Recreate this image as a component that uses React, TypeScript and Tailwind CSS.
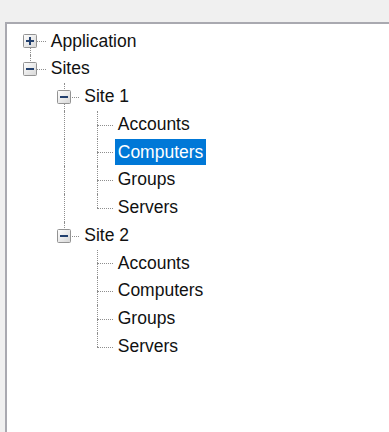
import { useId } from "react";

type TreeNode = {
  label: string;
  children?: TreeNode[];
  expanded?: boolean;
  selected?: boolean;
};

type FlatRow = {
  node: TreeNode;
  guides: boolean[];
  hasNext: boolean;
  isFirstRoot: boolean;
};

const siteItems = (selected?: string): TreeNode[] =>
  ["Accounts", "Computers", "Groups", "Servers"].map((label) => ({
    label,
    selected: label === selected,
  }));

const TREE: TreeNode[] = [
  { label: "Application", children: [{ label: "Settings" }], expanded: false },
  {
    label: "Sites",
    expanded: true,
    children: [
      { label: "Site 1", expanded: true, children: siteItems("Computers") },
      { label: "Site 2", expanded: true, children: siteItems() },
    ],
  },
];

function flatten(nodes: TreeNode[], guides: boolean[] = [], out: FlatRow[] = []) {
  nodes.forEach((node, i) => {
    const hasNext = i < nodes.length - 1;
    out.push({ node, guides, hasNext, isFirstRoot: guides.length === 0 && i === 0 });
    if (node.children && node.expanded) {
      flatten(node.children, [...guides, hasNext], out);
    }
  });
  return out;
}

function ExpandBox({ open }: { open: boolean }) {
  const id = useId();
  return (
    <svg
      className="absolute left-1/2 top-1/2 -translate-x-1/2 -translate-y-1/2"
      width="14"
      height="14"
      viewBox="0 0 14 14"
    >
      <defs>
        <linearGradient id={id} x1="0" y1="0" x2="1" y2="1">
          <stop offset="0" stopColor="#ffffff" />
          <stop offset="1" stopColor="#d6d6d6" />
        </linearGradient>
      </defs>
      <rect x="0.5" y="0.5" width="13" height="13" rx="1" fill={`url(#${id})`} stroke="#939393" />
      <rect x="3" y="6" width="8" height="2" fill="#22406e" />
      {!open && <rect x="6" y="3" width="2" height="8" fill="#22406e" />}
    </svg>
  );
}

function Row({ row }: { row: FlatRow }) {
  const { node, guides, hasNext, isFirstRoot } = row;
  const hasChildren = !!node.children?.length;
  return (
    <div className="flex h-[27.75px] items-center">
      {guides.map((cont, i) => (
        <div key={i} className="relative h-full w-[33.5px] shrink-0">
          {cont && (
            <span className="absolute left-1/2 top-0 h-full border-l border-dotted border-[#8e8e8e]" />
          )}
        </div>
      ))}
      <div className="relative h-full w-[33.5px] shrink-0">
        {!isFirstRoot && (
          <span className="absolute left-1/2 top-0 h-1/2 border-l border-dotted border-[#8e8e8e]" />
        )}
        {hasNext && (
          <span className="absolute left-1/2 top-1/2 bottom-0 border-l border-dotted border-[#8e8e8e]" />
        )}
        <span className="absolute left-1/2 right-[1px] top-1/2 border-t border-dotted border-[#8e8e8e]" />
        {hasChildren && <ExpandBox open={!!node.expanded} />}
      </div>
      <span
        className={
          node.selected
            ? "ml-[1px] flex h-[26px] items-center bg-[#0078d7] px-[3px] text-white"
            : "ml-[1px] flex h-[26px] items-center px-[3px] text-[#111]"
        }
      >
        {node.label}
      </span>
    </div>
  );
}

export default function App() {
  const rows = flatten(TREE);
  return (
    <div className="h-[432px] w-[389px] overflow-hidden bg-[#f0f0f0] pl-[5px] pt-[22px]">
      <div
        className="h-[480px] w-[460px] border-l-2 border-t-2 border-[#a9a9b0] bg-white pl-[6.25px] pt-[3.6px] text-[17.5px] leading-none"
        style={{ fontFamily: '"Liberation Sans", Arial, sans-serif' }}
      >
        {rows.map((row, i) => (
          <Row key={i} row={row} />
        ))}
      </div>
    </div>
  );
}
